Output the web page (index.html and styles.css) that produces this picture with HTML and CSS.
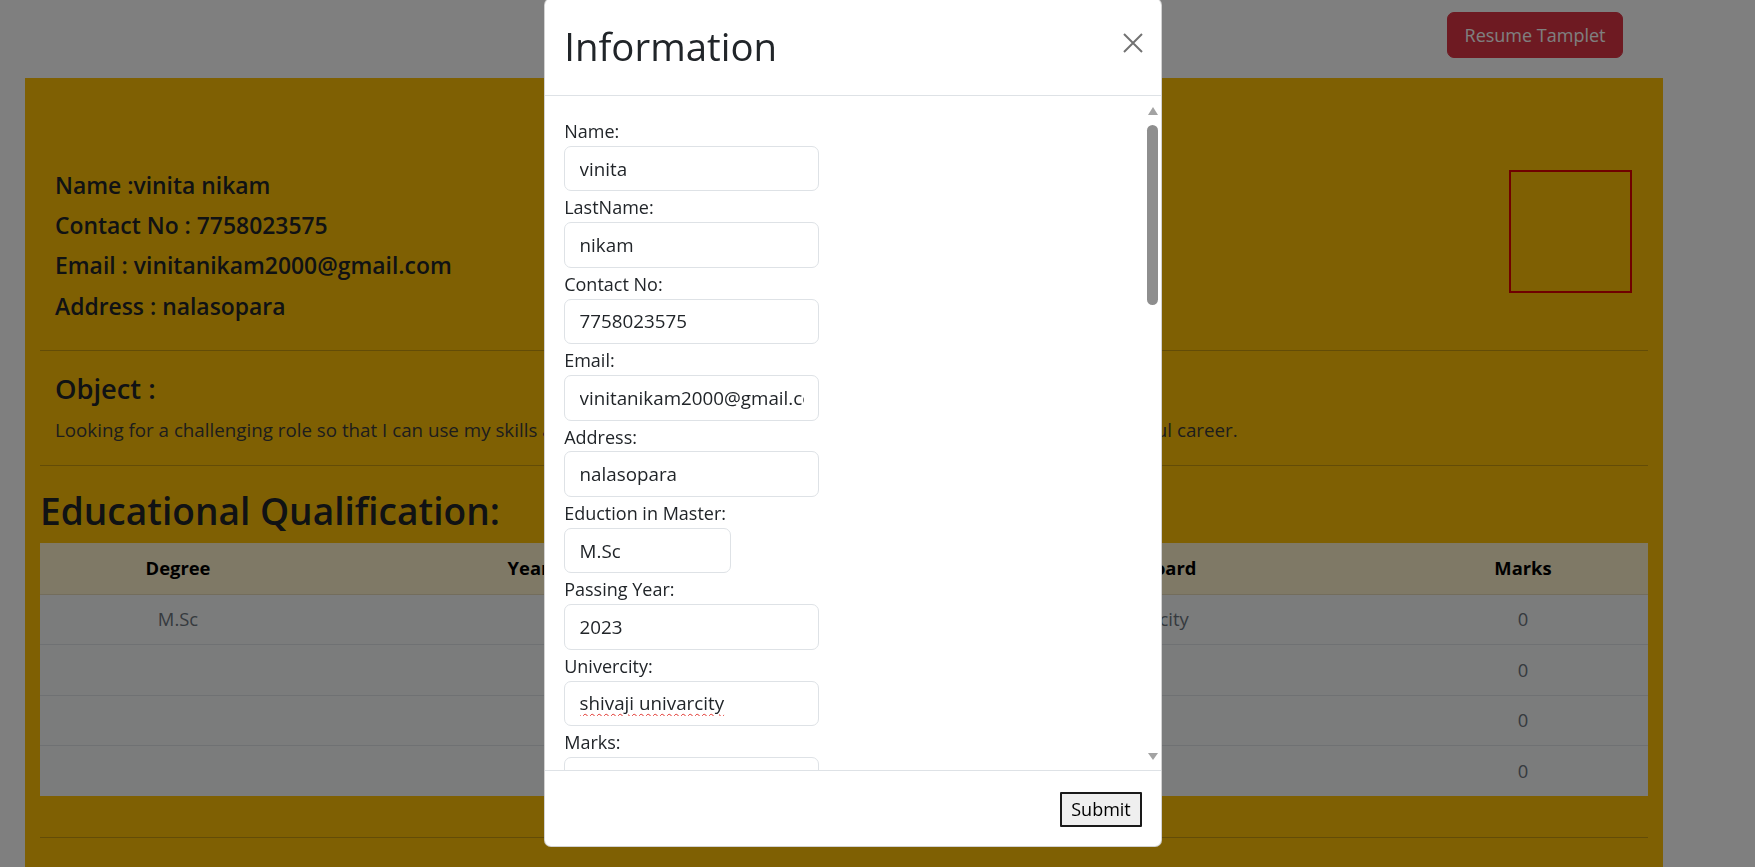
FILE: index.html
```html
<!DOCTYPE html>
<html lang="en">
<head>
<meta charset="utf-8">
<title>Resume</title>
<link rel="stylesheet" href="styles.css">
</head>
<body>
<div class="page">
  <div class="topbar">
    <button class="btn-danger" type="button">Resume Tamplet</button>
  </div>
  <div class="resume">
    <div class="head">
      <div class="info">
        <h5>Name :vinita nikam</h5>
        <h5>Contact No : 7758023575</h5>
        <h5>Email : vinitanikam2000@gmail.com</h5>
        <h5>Address : nalasopara</h5>
      </div>
      <div class="photo"></div>
    </div>
    <hr>
    <div class="objective">
      <h4>Object :</h4>
      <p>Looking for a challenging role so that I can use my skills and knowledge for the growth of the organization and build a successful career.</p>
    </div>
    <hr>
    <h2 class="edu-title">Educational Qualification:</h2>
    <table class="edu">
      <thead>
        <tr><th class="c1">Degree</th><th class="c2">Year of Passing</th><th class="c3">University/Board</th><th class="c4">Marks</th></tr>
      </thead>
      <tbody>
        <tr><td>M.Sc</td><td>2023</td><td>shivaji univarcity</td><td>0</td></tr>
        <tr><td></td><td></td><td></td><td>0</td></tr>
        <tr><td></td><td></td><td></td><td>0</td></tr>
        <tr><td></td><td></td><td></td><td>0</td></tr>
      </tbody>
    </table>
    <hr class="last">
  </div>
</div>

<div class="backdrop"></div>

<div class="modal">
  <div class="modal-header">
    <h2 class="modal-title">Information</h2>
    <button class="btn-close" type="button" aria-label="Close">
      <svg width="20" height="20" viewBox="0 0 20 20"><path d="M1 1L19 19M19 1L1 19" stroke="#000" stroke-width="2" fill="none"/></svg>
    </button>
  </div>
  <div class="modal-body">
    <form class="form">
      <label>Name:</label>
      <input type="text" value="vinita">
      <label>LastName:</label>
      <input type="text" value="nikam">
      <label>Contact No:</label>
      <input type="text" value="7758023575">
      <label>Email:</label>
      <input type="text" value="vinitanikam2000@gmail.com">
      <label>Address:</label>
      <input type="text" value="nalasopara">
      <label>Eduction in Master:</label>
      <input type="text" class="narrow" value="M.Sc">
      <label>Passing Year:</label>
      <input type="text" value="2023">
      <label>Univercity:</label>
      <input type="text" class="misspelled" value="shivaji univarcity">
      <label>Marks:</label>
      <input type="text" value="0">
    </form>
    <div class="scrollbar">
      <span class="arrow up"></span>
      <span class="thumb"></span>
      <span class="arrow down"></span>
    </div>
  </div>
  <div class="modal-footer">
    <button class="submit" type="button">Submit</button>
  </div>
</div>
</body>
</html>
```

FILE: styles.css
```css
* { box-sizing: border-box; }

html, body {
  margin: 0;
  height: 100%;
  overflow: hidden;
}

body {
  font-family: "Open Sans", "Liberation Sans", sans-serif;
  font-size: 19.2px;
  line-height: 1.5;
  color: #212529;
  background: #fff;
}

.page {
  width: 1755px;
}

.topbar {
  height: 78px;
  display: flex;
  justify-content: flex-end;
  align-items: flex-start;
  padding: 12px 132px 0 0;
}

.btn-danger {
  width: 176px;
  height: 46px;
  background: #dc3545;
  color: #fff;
  border: 1px solid #dc3545;
  border-radius: 7px;
  font-family: inherit;
  font-size: 18px;
  line-height: 1.5;
  padding: 0;
}

.resume {
  margin-left: 25px;
  width: 1638px;
  background: #ffc107;
  padding: 94px 15px 60px 15px;
}

.head {
  display: flex;
  justify-content: space-between;
  align-items: flex-start;
  padding: 0 16px 0 15px;
}

.info h5 {
  margin: 0 0 11.4px 0;
  font-size: 22.9px;
  font-weight: 600;
  line-height: 28.8px;
}

.photo {
  width: 123px;
  height: 123px;
  border: 2px solid #e00000;
  margin-top: -2px;
}

hr {
  margin: 17px 0 0 0;
  border: 0;
  border-top: 1px solid rgba(33, 37, 41, 0.25);
}

.objective {
  padding: 21.5px 15px 0 15px;
}

.objective h4 {
  margin: 0 0 10px 0;
  font-size: 27.3px;
  font-weight: 600;
  line-height: 34.5px;
}

.objective p {
  margin: 0 0 22px 0;
  font-size: 18.75px;
  line-height: 26px;
  color: #3a3a3a;
}

.objective + hr {
  margin-top: 0;
}

.edu-title {
  margin: 22px 0 9px 0;
  font-size: 37.1px;
  font-weight: 600;
  line-height: 46px;
}

.edu {
  width: 1608px;
  border-collapse: collapse;
  table-layout: fixed;
  text-align: center;
}

.edu th,
.edu td {
  padding: 10.4px 9.6px;
  line-height: 28.8px;
  border-bottom: 1px solid #dee2e6;
}

.edu th {
  background: #fff3cd;
  color: #000;
  font-weight: 700;
  font-size: 18.4px;
  border-bottom-color: #e6dbb9;
  padding-top: 11px;
  padding-bottom: 11px;
}

.edu td {
  background: #f6f8f9;
  color: #6c757d;
  font-size: 18.4px;
}

.edu tbody tr:last-child td {
  border-bottom: 0;
}

.edu .c1 { width: 276px; }
.edu .c2 { width: 522px; }
.edu .c3 { width: 560px; }
.edu .c4 { width: 250px; }

hr.last {
  margin-top: 41px;
}

.backdrop {
  position: fixed;
  inset: 0;
  background: rgba(0, 0, 0, 0.5);
}

.modal {
  position: fixed;
  left: 544px;
  top: -2px;
  width: 618px;
  background: #fff;
  border: 1px solid rgba(0, 0, 0, 0.175);
  border-radius: 7px;
  display: flex;
  flex-direction: column;
  overflow: hidden;
}

.modal-header {
  display: flex;
  align-items: center;
  justify-content: space-between;
  padding: 19.2px 18px 19.2px 19.2px;
  border-bottom: 1px solid #dee2e6;
}

.modal-title {
  margin: 0;
  font-size: 38.4px;
  font-weight: 500;
  line-height: 57.6px;
}

.btn-close {
  display: flex;
  padding: 0;
  margin: 0;
  border: 0;
  background: transparent;
  opacity: 0.55;
  margin-top: -8px;
}

.modal-body {
  position: relative;
  height: 674px;
  overflow: hidden;
  padding: 21px 19.2px 0 19.2px;
}

.form {
  display: flex;
  flex-direction: column;
  align-items: flex-start;
}

.form label {
  display: block;
  font-size: 18px;
  line-height: 28.8px;
}

.form input {
  width: 255px;
  height: 45.6px;
  margin: 0 0 2px 0;
  padding: 0 14.4px;
  border: 1px solid #dee2e6;
  border-radius: 7px;
  font-family: inherit;
  font-size: 18.8px;
  color: #212529;
  background: #fff;
  outline: none;
}

.form input.narrow {
  width: 167px;
}

.form input.misspelled {
  text-decoration: underline wavy #e0302a;
  text-decoration-thickness: 1px;
  text-underline-offset: 3px;
}

.scrollbar {
  position: absolute;
  top: 11px;
  right: 3px;
  width: 11px;
  bottom: 10px;
  display: flex;
  flex-direction: column;
  align-items: center;
}

.arrow {
  width: 0;
  height: 0;
  border-left: 5px solid transparent;
  border-right: 5px solid transparent;
}

.arrow.up {
  border-bottom: 8px solid #a3a3a3;
}

.arrow.down {
  border-top: 7px solid #a3a3a3;
  margin-top: auto;
}

.thumb {
  width: 11px;
  height: 180px;
  margin-top: 10px;
  background: #8e8e8e;
  border-radius: 6px;
}

.modal-footer {
  display: flex;
  justify-content: flex-end;
  padding: 21px 19px 19px 19px;
  border-top: 1px solid #dee2e6;
}

.submit {
  width: 82px;
  height: 35px;
  background: #efefef;
  border: 2px solid #1a1a1a;
  border-radius: 1px;
  font-family: inherit;
  font-size: 18px;
  line-height: 1;
  color: #000;
  padding: 0;
}
```
